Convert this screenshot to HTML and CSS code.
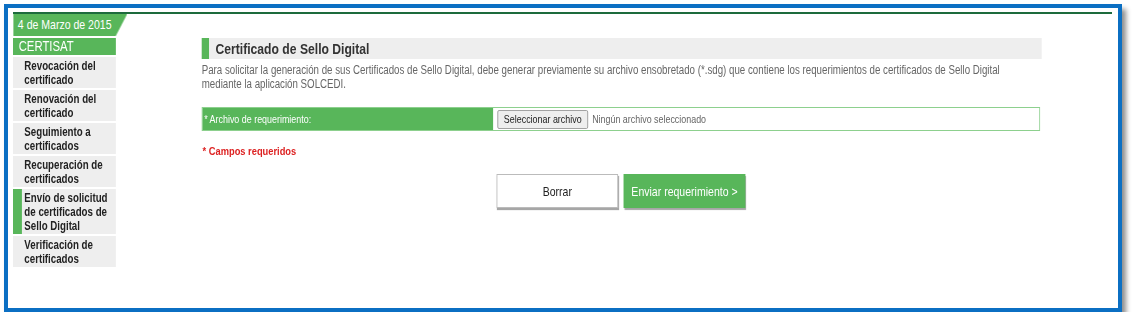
FILE: index.html
```html
<!DOCTYPE html>
<html lang="es">
<head>
    <meta charset="UTF-8">
    <title>CERTISAT - Certificado de Sello Digital</title>
    <link rel="stylesheet" href="styles.css">
</head>
<body>
    <div class="frame">
        <div class="top-line"></div>
        <!-- the capture is squeezed horizontally, so the whole layout is narrowed -->
        <div class="layout">
            <div class="sidebar">
                <div class="date-tab">4 de Marzo de 2015</div>
                <div class="section-title">CERTISAT</div>
                <a href="#" class="menu-item">Revocación del certificado</a>
                <a href="#" class="menu-item">Renovación del certificado</a>
                <a href="#" class="menu-item">Seguimiento a certificados</a>
                <a href="#" class="menu-item">Recuperación de certificados</a>
                <a href="#" class="menu-item active">Envío de solicitud de certificados de Sello Digital</a>
                <a href="#" class="menu-item">Verificación de certificados</a>
            </div>

            <div class="main">
                <div class="page-header">
                    <h2>Certificado de Sello Digital</h2>
                </div>
                <p class="intro">
                    Para solicitar la generación de sus Certificados de Sello Digital, debe generar previamente su archivo ensobretado (*.sdg) que contiene los requerimientos de certificados de Sello Digital mediante la aplicación SOLCEDI.
                </p>

                <div class="form-row">
                    <label class="form-label">* Archivo de requerimiento:</label>
                    <div class="form-field">
                        <span class="file-button">Seleccionar archivo</span>
                        <span class="file-name">Ningún archivo seleccionado</span>
                    </div>
                </div>

                <p class="required">* Campos requeridos</p>

                <div class="actions">
                    <button class="btn btn-clear">Borrar</button>
                    <button class="btn btn-send">Enviar requerimiento &gt;</button>
                </div>
            </div>
        </div>
    </div>
</body>
</html>
```

FILE: styles.css
```css
body, html {
    margin: 0;
    padding: 0;
    background-color: #fff;
    font-family: "Liberation Sans", Arial, sans-serif;
}
.frame {
    margin: 4px 0 0 4px;
    width: 1105px;
    height: 296px;
    border: 4px solid #0b6fc3;
    background-color: #fff;
    box-shadow: 4px 5px 5px rgba(0, 0, 0, 0.45);
    padding: 4px 0 0 5px;
}
.top-line {
    width: 1099px;
    height: 2px;
    background-color: #1d6b3c;
}
.layout {
    display: flex;
    width: 1357px;
    transform: scaleX(0.81);
    transform-origin: 0 0;
}
.sidebar {
    width: 127px;
    flex-shrink: 0;
    display: flex;
    flex-direction: column;
    gap: 2px;
}
.date-tab {
    width: 141px;
    height: 22px;
    line-height: 22px;
    background-color: #58b65a;
    color: #fff;
    font-size: 13px;
    padding-left: 6px;
    box-sizing: border-box;
    clip-path: polygon(0 0, 100% 0, 90% 100%, 0 100%);
}
.section-title {
    height: 17px;
    line-height: 17px;
    background-color: #58b65a;
    color: #fff;
    font-size: 14px;
    padding-left: 7px;
}
.menu-item {
    display: block;
    background-color: #eeeeee;
    color: #222;
    text-decoration: none;
    font-size: 12px;
    font-weight: bold;
    line-height: 14px;
    padding: 2px 4px 1px 14px;
}
.menu-item.active {
    border-left: 11px solid #58b65a;
    padding-left: 3px;
}
.main {
    margin-left: 106px;
    width: 1037px;
    padding-top: 24px;
}
.page-header {
    height: 21px;
    background-color: #eeeeee;
    border-left: 9px solid #58b65a;
    display: flex;
    align-items: center;
}
.page-header h2 {
    margin: 0 0 0 8px;
    font-size: 15px;
    color: #333;
}
.intro {
    margin: 4px 0 0;
    font-size: 12px;
    line-height: 14px;
    color: #666;
}
.form-row {
    display: flex;
    margin-top: 16px;
    width: 1035px;
    height: 24px;
    border: 1px solid #8dd08e;
    box-sizing: border-box;
}
.form-label {
    width: 359px;
    background-color: #58b65a;
    color: #fff;
    font-size: 11px;
    line-height: 22px;
    padding-left: 2px;
    box-sizing: border-box;
}
.form-field {
    flex: 1;
    display: flex;
    align-items: center;
    padding-left: 4px;
    border-left: 1px solid #fff;
}
.file-button {
    font-size: 11px;
    color: #222;
    background-color: #eeeeee;
    border: 1px solid #999;
    border-radius: 2px;
    padding: 2px 7px;
    line-height: 13px;
}
.file-name {
    font-size: 11px;
    color: #666;
    margin-left: 5px;
}
.required {
    margin: 14px 0 0 1px;
    font-size: 11.5px;
    font-weight: bold;
    color: #d22;
}
.actions {
    display: flex;
    gap: 7px;
    margin: 17px 0 0 364px;
}
.btn {
    width: 150px;
    height: 34px;
    padding: 0;
    white-space: nowrap;
    font-family: inherit;
    font-size: 13px;
    border: 1px solid #bbb;
    box-shadow: 1px 2px 1px rgba(0, 0, 0, 0.35);
    cursor: pointer;
}
.btn-clear {
    background-color: #fff;
    color: #222;
}
.btn-send {
    background-color: #58b65a;
    color: #fff;
    border-color: #58b65a;
}
```
